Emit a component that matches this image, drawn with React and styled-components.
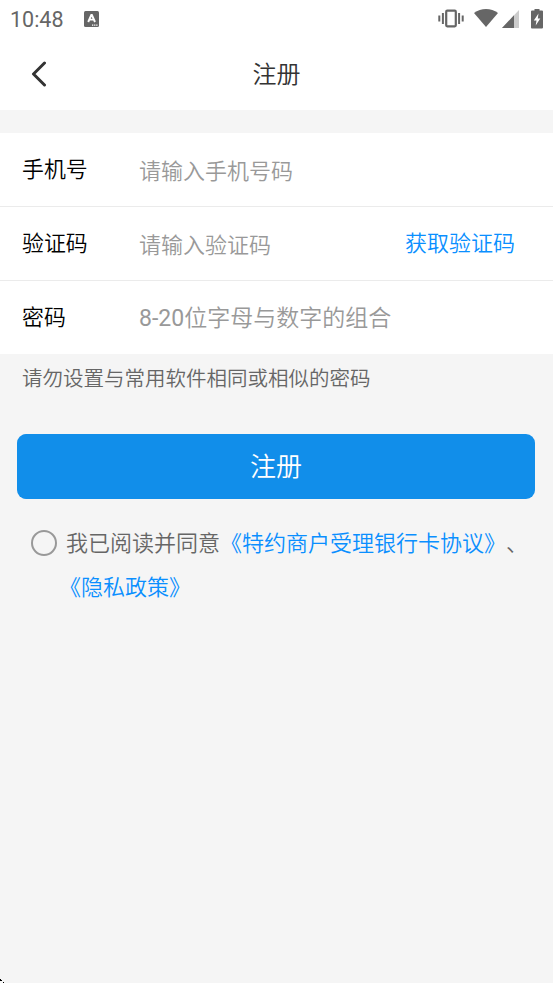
import React from 'react';
import styled, { createGlobalStyle } from 'styled-components';

const GlobalStyle = createGlobalStyle`
  * {
    box-sizing: border-box;
  }
  body {
    margin: 0;
    background: #f5f5f5;
    font-family: Roboto, 'Noto Sans CJK SC', sans-serif;
    font-weight: 350;
    text-spacing-trim: space-all;
  }
`;

const Screen = styled.main`
  position: relative;
  width: 100%;
  height: 983px;
  overflow: hidden;
  background: #f5f5f5;
`;

const StatusBar = styled.div`
  display: flex;
  align-items: center;
  height: 38px;
  padding: 0 10px;
  background: #fff;
  color: #666;
`;

const Time = styled.span`
  width: 74px;
  padding-top: 1px;
  font-size: 21.5px;
  font-weight: 400;
  line-height: 38px;
`;

const StatusIcons = styled.div`
  display: flex;
  align-items: center;
  margin-left: auto;
`;

const Header = styled.header`
  display: grid;
  grid-template-columns: 80px 1fr 80px;
  align-items: center;
  height: 72px;
  background: #fff;
`;

const BackButton = styled.button`
  display: flex;
  padding: 0 0 0 30px;
  border: 0;
  background: none;
`;

const Title = styled.h1`
  margin: 0;
  padding-top: 2px;
  font-size: 24px;
  font-weight: inherit;
  line-height: 70px;
  text-align: center;
  color: #333;
`;

const Form = styled.form`
  margin-top: 23px;
`;

const Field = styled.label`
  display: flex;
  align-items: center;
  height: ${prop => (prop.$last ? '73px' : '74px')};
  padding: 0 38px 0 22px;
  border-bottom: ${prop => (prop.$last ? '0' : '1px solid #ebebeb')};
  background: #fff;
`;

const FieldName = styled.span`
  width: 117px;
  font-size: 21.9px;
  line-height: 72px;
  color: #000;
`;

const Input = styled.input`
  flex: 1;
  min-width: 0;
  height: 72px;
  padding: 3px 0 0;
  border: 0;
  outline: 0;
  background: none;
  font-family: inherit;
  font-size: 22px;
  font-weight: inherit;
  &::placeholder {
    color: #999;
    opacity: 1;
  }
`;

const PasswordInput = styled(Input)`
  padding-top: 1px;
  font-family: Roboto, 'Noto Sans CJK SC DemiLight', 'Noto Sans CJK SC', sans-serif;
  font-size: 23px;
  font-weight: 400;
`;

const CodeButton = styled.button`
  padding: 0;
  border: 0;
  background: none;
  font-family: inherit;
  font-size: 22px;
  font-weight: inherit;
  line-height: 72px;
  color: #0a8fff;
`;

const Hint = styled.p`
  margin: 0;
  padding: 1px 0 0 22px;
  font-size: 20.5px;
  line-height: 48px;
  color: #666;
`;

const Submit = styled.button`
  display: block;
  width: 518px;
  height: 65px;
  margin: 31px 0 0 17px;
  padding: 0 0 5px;
  border: 0;
  border-radius: 9px;
  background: #118eea;
  font-family: inherit;
  font-size: 26px;
  font-weight: inherit;
  color: #fff;
`;

const Agreement = styled.div`
  display: flex;
  align-items: flex-start;
  margin-top: 23px;
  padding-left: 31px;
`;

const Radio = styled.span`
  flex: none;
  width: 26px;
  height: 26px;
  margin: 8px 9px 0 0;
  border: 2px solid #999;
  border-radius: 50%;
`;

const AgreementText = styled.p`
  margin: 0;
  font-size: 22px;
  line-height: 44px;
  white-space: nowrap;
  color: #666;
`;

const Link = styled.a`
  margin-left: ${prop => (prop.$hang ? '-7px' : '0')};
  color: #0a8fff;
`;

const CornerMark = styled.svg`
  position: absolute;
  left: 0;
  bottom: 0;
`;

const Wifi = styled.span`
  display: flex;
  margin: 0 4px 0 10px;
`;

const Signal = styled.span`
  display: flex;
  margin-right: 12px;
`;

function KeyboardIcon() {
  return (
    <svg width="15" height="16" viewBox="0 0 15 16">
      <rect width="15" height="16" rx="1.5" fill="#666" />
      <path d="M4.2 11 7.3 4h.6L11 11M5.4 8.6h4.4" fill="none" stroke="#fff" strokeWidth="1.9" />
      <path d="M8 14.2h1.3m.8 0h1.3m.8 0h1.3" stroke="#fff" strokeWidth="1.2" />
    </svg>
  );
}

function VibrateIcon() {
  return (
    <svg width="26" height="20" viewBox="0 0 26 20">
      <rect x="8.2" y="1.7" width="9.6" height="15.6" rx="1" fill="none" stroke="#666" strokeWidth="2.2" />
      <path d="M4.9 4v11M21.1 4v11M1.3 6.5v6M24.7 6.5v6" stroke="#666" strokeWidth="2" />
    </svg>
  );
}

function WifiIcon() {
  return (
    <svg width="24" height="20" viewBox="0 0 24 20">
      <path d="M0 4C7 -1.3 17 -1.3 24 4L12 18z" fill="#666" />
    </svg>
  );
}

function SignalIcon() {
  return (
    <svg width="17" height="18" viewBox="0 0 17 18">
      <path d="M17 0v18H0z" fill="#ccc" />
      <path d="M12 5.3V18H0z" fill="#666" />
    </svg>
  );
}

function BatteryIcon() {
  return (
    <svg width="12" height="20" viewBox="0 0 12 20">
      <path d="M3.5 0h5v1.500H11q1 0 1 1V18.500q0 1-1 1H1q-1 0-1-1V2.500q0-1 1-1h2.500z" fill="#666" />
      <path d="M7.500 4.500 2.800 11.500H5.500L4.700 16.500 9.300 9.500H6.800z" fill="#fff" />
    </svg>
  );
}

function App() {
  return (
    <Screen>
      <GlobalStyle />
      <StatusBar>
        <Time>10:48</Time>
        <KeyboardIcon />
        <StatusIcons>
          <VibrateIcon />
          <Wifi>
            <WifiIcon />
          </Wifi>
          <Signal>
            <SignalIcon />
          </Signal>
          <BatteryIcon />
        </StatusIcons>
      </StatusBar>
      <Header>
        <BackButton type="button" aria-label="返回">
          <svg width="18" height="26" viewBox="0 0 18 26">
            <path d="M14.500 2 3.500 13l11 11" fill="none" stroke="#333" strokeWidth="3" strokeLinecap="round" strokeLinejoin="round" />
          </svg>
        </BackButton>
        <Title>注册</Title>
      </Header>
      <Form>
        <Field>
          <FieldName>手机号</FieldName>
          <Input type="tel" placeholder="请输入手机号码" />
        </Field>
        <Field>
          <FieldName>验证码</FieldName>
          <Input placeholder="请输入验证码" />
          <CodeButton type="button">获取验证码</CodeButton>
        </Field>
        <Field $last>
          <FieldName>密码</FieldName>
          <PasswordInput type="password" placeholder="8-20位字母与数字的组合" />
        </Field>
        <Hint>请勿设置与常用软件相同或相似的密码</Hint>
        <Submit type="button">注册</Submit>
      </Form>
      <Agreement>
        <Radio />
        <AgreementText>
          我已阅读并同意<Link>《特约商户受理银行卡协议》</Link>、
          <br />
          <Link $hang>《隐私政策》</Link>
        </AgreementText>
      </Agreement>
      <CornerMark width="4" height="4" viewBox="0 0 4 4">
        <path d="M0 0h1v1h1v1H0zM3 3h1v1H3z" fill="#000" />
      </CornerMark>
    </Screen>
  );
}

export default App;
